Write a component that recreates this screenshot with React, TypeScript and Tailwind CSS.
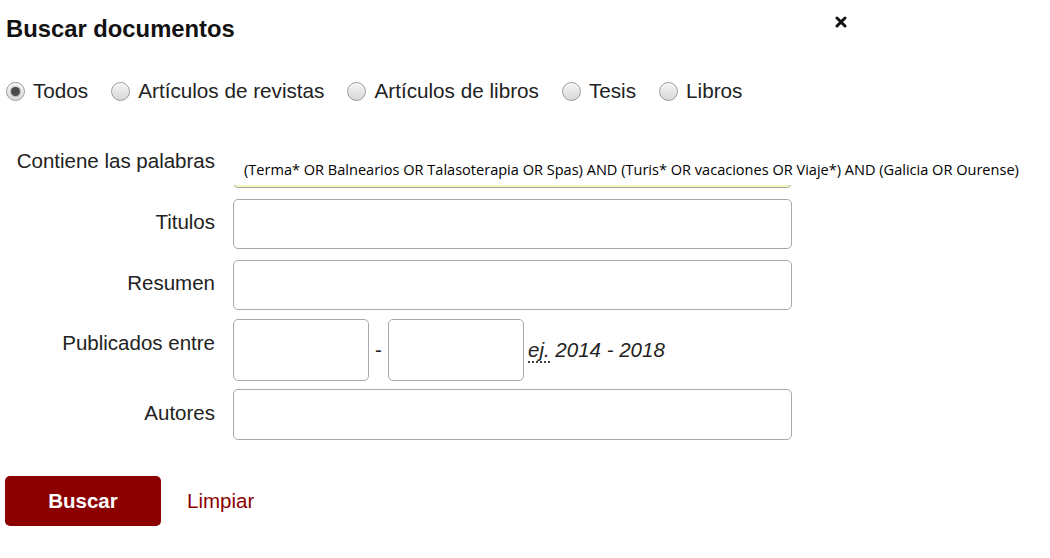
import { useState } from "react";

const TYPES = ["Todos", "Artículos de revistas", "Artículos de libros", "Tesis", "Libros"];

const QUERY =
  "(Terma* OR Balnearios OR Talasoterapia OR Spas) AND (Turis* OR vacaciones OR Viaje*) AND (Galicia OR Ourense)";

function Radio({ checked }: { checked: boolean }) {
  return (
    <span className="w-[19px] h-[19px] rounded-full border border-[#9a9a9a] bg-gradient-to-b from-[#f4f4f4] to-[#d8d8d8] flex items-center justify-center shrink-0 shadow-[inset_0_1px_1px_rgba(255,255,255,0.8)]">
      {checked && <span className="w-[9px] h-[9px] rounded-full bg-[#4a4a4a] shadow-[0_0_0_1px_rgba(120,120,120,0.35)]" />}
    </span>
  );
}

function Box({ className = "" }: { className?: string }) {
  return <div className={"border border-[#a9a9a9] rounded-[5px] bg-white " + className} />;
}

export default function App() {
  const [type, setType] = useState("Todos");

  return (
    <div className="relative w-[1050px] h-[558px] bg-white text-[#222] font-['Liberation_Sans',Arial,sans-serif] overflow-hidden">
      {/* Close */}
      <button className="absolute left-[835px] top-[16px] w-[12px] h-[12px]" title="Cerrar">
        <svg viewBox="0 0 12 12" className="w-[12px] h-[12px]">
          <path d="M2 2 L10 10 M10 2 L2 10" stroke="#111" strokeWidth="3" strokeLinecap="round" />
        </svg>
      </button>

      <div className="px-[6px] pt-[14px]">
        <h1 className="text-[23.8px] leading-[30px] font-bold text-[#111]">Buscar documentos</h1>

        {/* Document type */}
        <div className="flex items-center gap-[23px] mt-[35px] text-[20.7px] leading-[24px]">
          {TYPES.map((t) => (
            <label key={t} className="flex items-center gap-[8px] cursor-pointer" onClick={() => setType(t)}>
              <Radio checked={type === t} />
              <span>{t}</span>
            </label>
          ))}
        </div>
      </div>

      {/* Form */}
      <div className="mt-[35px] flex flex-col text-[20.5px] leading-[24px]">
        <div className="relative flex items-center h-[50px]">
          <div className="w-[215px] text-right pb-[4px] shrink-0">Contiene las palabras</div>
          <div className="ml-[18px] w-[559px] h-[50px] border border-[#a9a9a9] rounded-[5px] bg-[#f3f5b8]" />
          <div className="absolute left-[232px] top-[-4px] w-[800px] h-[51px] bg-white pl-[12px] pt-[25px] whitespace-nowrap font-['Open_Sans',sans-serif] text-[14.55px] leading-[20px] text-black">
            {QUERY}
          </div>
        </div>

        <div className="flex items-center h-[50px] mt-[11px]">
          <div className="w-[215px] text-right pb-[4px] shrink-0">Titulos</div>
          <Box className="ml-[18px] w-[559px] h-[50px]" />
        </div>

        <div className="flex items-center h-[50px] mt-[11px]">
          <div className="w-[215px] text-right pb-[4px] shrink-0">Resumen</div>
          <Box className="ml-[18px] w-[559px] h-[50px]" />
        </div>

        <div className="flex items-center h-[62px] mt-[9px]">
          <div className="w-[215px] text-right pb-[14px] shrink-0">Publicados entre</div>
          <Box className="ml-[18px] w-[136px] h-[62px]" />
          <span className="w-[19px] text-center">-</span>
          <Box className="w-[136px] h-[62px]" />
          <span className="ml-[4px] italic">
            <abbr title="ejemplo" className="no-underline border-b-2 border-dotted border-[#444]">ej.</abbr> 2014 - 2018
          </span>
        </div>

        <div className="flex items-center h-[51px] mt-[8px]">
          <div className="w-[215px] text-right pb-[4px] shrink-0">Autores</div>
          <Box className="ml-[18px] w-[559px] h-[51px]" />
        </div>

        <div className="flex items-center mt-[36px] ml-[5px]">
          <button className="w-[156px] h-[50px] rounded-[5px] bg-[#8b0000] text-white font-bold text-[20.5px]">
            Buscar
          </button>
          <button className="ml-[26px] text-[#8b0000] text-[20.5px]">Limpiar</button>
        </div>
      </div>
    </div>
  );
}
